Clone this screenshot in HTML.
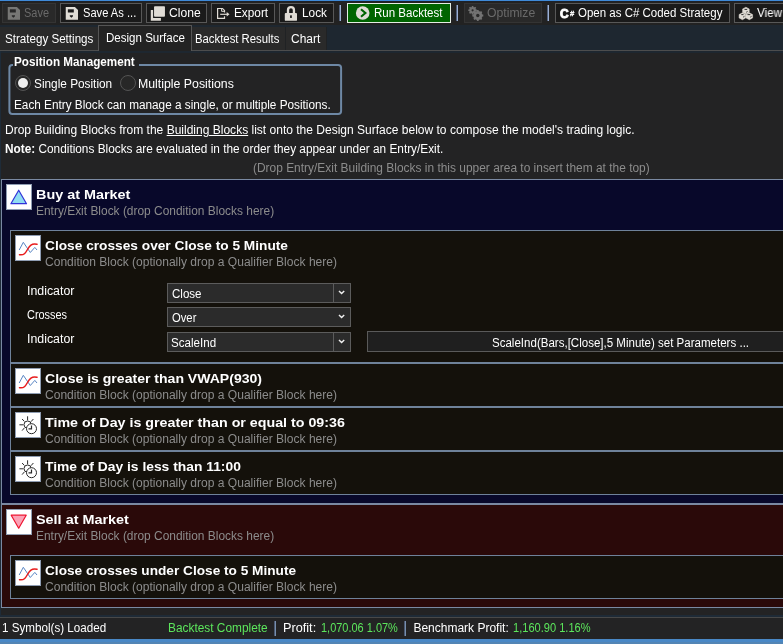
<!DOCTYPE html>
<html><head><meta charset="utf-8"><title>Strategy</title>
<style>
*{box-sizing:border-box;margin:0;padding:0}
html,body{width:783px;height:644px;overflow:hidden;background:#232324;font-family:"Liberation Sans","DejaVu Sans",sans-serif;font-size:12px;color:#fff}
body{position:relative}
#wrap{position:absolute;left:0;top:0;width:783px;height:644px;will-change:transform}
.abs{position:absolute}
.t{position:absolute;white-space:nowrap;line-height:16px;font-size:12px;transform-origin:0 50%}
.b{font-weight:bold}
.g{color:#8c8c8c}
.h{font-size:13.33px;font-weight:bold;line-height:18px}
#topline{left:0;top:0;width:783px;height:1px;background:#3f8ad8}
#topline2{left:0;top:1px;width:783px;height:1px;background:#1d2128}
#toolbar{left:0;top:2px;width:783px;height:23px;background:#222222}
.btn{position:absolute;top:3px;height:20px;background:#1a1a1a;border:1px solid #585858}
.btn.dis{background:#292929;border-color:#343434}
.btn.run{background:#006400;border-color:#e4ece4}
.sep{position:absolute;top:5px;width:2px;height:16px;background:linear-gradient(90deg,#55647f 50%,#9cb0d4 50%)}
#tabs{left:0;top:25px;width:783px;height:28px;background:#1e2730}
#tabline{left:0;top:50px;width:783px;height:1px;background:#4d4d4d}
.tab{position:absolute;top:27px;height:23px;background:#2a2a2a;border-right:1px solid #202224}
.tab.act{top:25px;height:26px;background:#232323;border:1px solid #555;border-bottom:none}

.radio{position:absolute;width:16px;height:16px;border-radius:50%;border:1px solid #545454;background:#272727}
.radio.on:after{content:"";position:absolute;left:2px;top:2px;width:10px;height:10px;border-radius:50%;background:#efefef}
#lstrip{left:0;top:51px;width:1px;height:565px;background:#1e2b38}
.entry{position:absolute;left:1px;width:790px;border:1px solid #7a89a2}
.buy{background:#08082a}
.sell{background:#2a0909}
.cond{position:absolute;left:10px;width:790px;background:#14110b;border:1px solid #6f829a}
.ico{position:absolute;width:26px;height:26px;background:#fff;border:1px solid #8f9db2}
.ico svg{display:block}
.combo{position:absolute;left:167px;width:184px;height:20px;background:#2b2b2b;border:1px solid #5c5c5c}
.combo .arr{position:absolute;right:0;top:0;width:17px;height:18px;border-left:1px solid #5c5c5c}
.combo.flat .arr{width:16px}
.combo.flat .arr{border-left:none}
#pbtn{left:367px;top:331px;width:520px;height:21px;background:#1f1f1f;border:1px solid #5a5a5a}
#sline1{left:0;top:615px;width:783px;height:2px;background:#1e2a36}
#sline2{left:0;top:617px;width:783px;height:1px;background:#484848}
#botline{left:0;top:639px;width:783px;height:5px;background:linear-gradient(#4988c6 60%,#5385b4 60%)}
.vsep{position:absolute;top:621px;width:2px;height:15px;background:linear-gradient(90deg,#4c5a72 50%,#768eae 50%)}
.grn{color:#5ce65c}
</style></head><body><div id="wrap">
<div id="topline" class="abs"></div><div id="topline2" class="abs"></div><div id="toolbar" class="abs"></div><div id="tabs" class="abs"></div><div id="tabline" class="abs"></div>
<div class="btn dis" style="left:2px;width:54px"></div>
<div class="btn " style="left:60px;width:82px"></div>
<div class="btn " style="left:146px;width:61px"></div>
<div class="btn " style="left:211px;width:64px"></div>
<div class="btn " style="left:279px;width:55px"></div>
<div class="btn run" style="left:347px;width:104px"></div>
<div class="btn dis" style="left:464px;width:78px"></div>
<div class="btn " style="left:555px;width:175px"></div>
<div class="btn " style="left:734px;width:60px"></div>
<svg class="abs" style="left:6px;top:5px" width="16" height="17" viewBox="6 5 16 17"><g transform="translate(-58 0)"><path d="M65.750 7H74.900L78 10.100V19.800H65.750z" fill="#777775"/><rect x="67.850" y="9.300" width="5.950" height="3.200" fill="#292929"/><path d="M69.800 15.200h3.200v1.100l-1.600 1.500l-1.600-1.500z" fill="#292929"/></g></svg>
<svg class="abs" style="left:64px;top:5px" width="16" height="17" viewBox="64 5 16 17"><g transform="translate(0 0)"><path d="M65.750 7H74.900L78 10.100V19.800H65.750z" fill="#e0dcd5"/><rect x="67.850" y="9.300" width="5.950" height="3.200" fill="#1a1a1a"/><path d="M69.800 15.200h3.200v1.100l-1.600 1.500l-1.600-1.500z" fill="#1a1a1a"/></g></svg>
<svg class="abs" style="left:149px;top:5px" width="18" height="17" viewBox="149 5 18 17"><path d="M150.800 10.100H153.100V17.900H160.900V20.800H150.800z" fill="#e0dcd5"/><rect x="154.050" y="6.200" width="10.900" height="10.550" rx="0.900" fill="#e0dcd5"/></svg>
<svg class="abs" style="left:215px;top:6px" width="17" height="15" viewBox="215 6 17 15"><path d="M224.500 12.500V10.400L222.500 8.500H217.600V18.300H224.500V16.200" fill="none" stroke="#e0dcd5" stroke-width="1.200"/><path d="M221.600 8.700V11.300H224.300" fill="none" stroke="#e0dcd5" stroke-width="1"/><path d="M220.200 14.300H227.500" stroke="#e0dcd5" stroke-width="1.150"/><path d="M226.700 12.100L229.500 14.300L226.700 16.500z" fill="#e0dcd5"/></svg>
<svg class="abs" style="left:283px;top:4px" width="16" height="18" viewBox="283 4 16 18"><rect x="284.800" y="13.100" width="12.200" height="7.700" rx="0.900" fill="#e0dcd5"/><path d="M288 13.600V10.100a2.970 2.970 0 0 1 5.940 0V13.600" fill="none" stroke="#e0dcd5" stroke-width="2.300"/><rect x="290.100" y="15.200" width="1.700" height="2.700" rx="0.500" fill="#1a1a1a"/></svg>
<svg class="abs" style="left:354px;top:4px" width="18" height="18" viewBox="354 4 18 18"><circle cx="362.700" cy="13" r="6.800" fill="#e0dcd5"/><path d="M361 9.300L365.400 13L361 16.700" fill="none" stroke="#006400" stroke-width="2.100"/></svg>
<svg class="abs" style="left:467px;top:5px" width="18" height="17" viewBox="467 5 18 17"><g transform="translate(467.200 6)"><g fill="#727272"><circle cx="5.400" cy="4.300" r="3.300"/><circle cx="10.600" cy="9.500" r="4.600"/><path d="M4.600 0h1.600v8.600h-1.600zM1.100 3.500h8.600v1.600h-8.600zM1.800 1.800l1.100-1.100l6.100 6.100l-1.100 1.100zM2.900 7.900l-1.100-1.100l6.100-6.100l1.100 1.100z"/><path d="M9.700 4h1.800v11h-1.800zM5.100 8.600h11v1.800h-11zM6.100 6.300l1.300-1.300l7.700 7.700l-1.300 1.300zM7.400 14l-1.300-1.300l7.700-7.700l1.300 1.300z"/></g><circle cx="5.400" cy="4.300" r="1.100" fill="#292929"/><circle cx="10.600" cy="9.500" r="1.700" fill="#292929"/></g></svg>
<svg class="abs" style="left:737px;top:5px" width="18" height="17" viewBox="737 5 18 17"><path d="M745.90 7.20L749.20 8.93L749.20 12.38L745.90 14.10L742.60 12.38L742.60 8.93zM742.40 12.80L745.70 14.53L745.70 17.98L742.40 19.70L739.10 17.98L739.10 14.53zM749.30 12.80L752.60 14.53L752.60 17.98L749.30 19.70L746.00 17.98L746.00 14.53z" fill="#e0dcd5" stroke="#e0dcd5" stroke-width="0.500" stroke-linejoin="round"/><path d="M744.500 9.400H747.200M746.300 12.200L747.500 11.500M741.300 14.600H743.500M743.200 17.100L744.400 16.400M747.500 14.600H750.300M750.300 17.100L751.500 16.400" fill="none" stroke="#1a1a1a" stroke-width="0.900"/></svg>
<div class="t b" id="csC" style="left:559.800px;top:6px;font-size:13px;line-height:16px;-webkit-text-stroke:0.900px #fff;transform:scaleX(0.92)">C</div>
<div class="t b" id="csH" style="left:569.600px;top:6px;font-size:7px;line-height:16px;-webkit-text-stroke:0.300px #fff;transform:scaleX(1.1)">#</div>
<div class="sep" style="left:339px"></div>
<div class="sep" style="left:456px"></div>
<div class="sep" style="left:547px"></div>
<div class="t " style="left:24.05px;top:5.00px;transform:scaleX(0.9136);color:#6a6a6a;">Save</div>
<div class="t " style="left:82.50px;top:5.00px;transform:scaleX(0.9278);">Save As ...</div>
<div class="t " style="left:169.14px;top:5.00px;transform:scaleX(1.0086);">Clone</div>
<div class="t " style="left:233.73px;top:5.00px;transform:scaleX(0.9831);">Export</div>
<div class="t " style="left:301.78px;top:5.00px;transform:scaleX(0.9855);">Lock</div>
<div class="t " style="left:373.97px;top:5.00px;transform:scaleX(0.9596);">Run Backtest</div>
<div class="t " style="left:487.23px;top:5.00px;transform:scaleX(1.0186);color:#6a6a6a;">Optimize</div>
<div class="t " style="left:578.25px;top:5.00px;transform:scaleX(0.9578);">Open as C# Coded Strategy</div>
<div class="t " style="left:757.17px;top:5.00px;transform:scaleX(0.9687);">View</div>
<div class="tab " style="left:0px;width:99px"></div>
<div class="tab act" style="left:98px;width:94px"></div>
<div class="tab " style="left:192px;width:94px"></div>
<div class="tab " style="left:286px;width:41px"></div>
<div class="t " style="left:5.14px;top:31.00px;transform:scaleX(0.9666);">Strategy Settings</div>
<div class="t " style="left:105.55px;top:30.00px;transform:scaleX(0.9620);">Design Surface</div>
<div class="t " style="left:195.16px;top:31.00px;transform:scaleX(0.9439);">Backtest Results</div>
<div class="t " style="left:291.13px;top:31.00px;transform:scaleX(0.9971);">Chart</div>
<svg class="abs" style="left:0;top:55px" width="350" height="65" viewBox="0 55 350 65"><rect x="9.400" y="64.900" width="331.700" height="49.100" rx="3" fill="none" stroke="#6e88a5" stroke-width="2"/></svg>
<div class="abs" style="left:12.500px;top:63px;width:126.500px;height:4px;background:#232324"></div>
<div class="t b" style="left:13.80px;top:54.00px;transform:scaleX(0.9730);">Position Management</div>
<div class="radio on" style="left:15px;top:75px"></div>
<div class="radio" style="left:120px;top:75px"></div>
<div class="t " style="left:33.76px;top:76.00px;transform:scaleX(0.9846);">Single Position</div>
<div class="t " style="left:138.20px;top:76.00px;transform:scaleX(1.0259);">Multiple Positions</div>
<div class="t " style="left:14.11px;top:97.00px;transform:scaleX(0.9810);">Each Entry Block can manage a single, or multiple Positions.</div>
<div class="t " style="left:4.75px;top:122.00px;transform:scaleX(1.0015);">Drop Building Blocks from the <u>Building Blocks</u> list onto the Design Surface below to compose the model's trading logic.</div>
<div class="t " style="left:4.93px;top:141.00px;transform:scaleX(0.9851);"><b>Note:</b> Conditions Blocks are evaluated in the order they appear under an Entry/Exit.</div>
<div class="t g" style="left:253.32px;top:160.00px;transform:scaleX(0.9946);">(Drop Entry/Exit Building Blocks in this upper area to insert them at the top)</div>
<div id="lstrip" class="abs"></div>
<div class="entry buy" style="top:179px;height:325px"></div>
<div class="entry sell" style="top:504px;height:104px"></div>
<div class="ico" style="left:6px;top:184px"><svg width="24" height="24" viewBox="1 1 24 24"><path d="M12.700 6.200L20.500 19.700H4.900z" fill="#8fdcf2" stroke="#3232d8" stroke-width="1.200" stroke-linejoin="round"/></svg></div>
<div class="ico" style="left:6px;top:509px"><svg width="24" height="24" viewBox="1 1 24 24"><path d="M12.700 19.200L20.200 6.200H5.200z" fill="#fba2b6" stroke="#ee1430" stroke-width="1.200" stroke-linejoin="round"/></svg></div>
<div class="t h" style="left:36.02px;top:186.00px;transform:scaleX(1.0800);">Buy at Market</div>
<div class="t g" style="left:36.13px;top:203.00px;transform:scaleX(0.9946);">Entry/Exit Block (drop Condition Blocks here)</div>
<div class="t h" style="left:36.08px;top:511.00px;transform:scaleX(1.0809);">Sell at Market</div>
<div class="t g" style="left:35.68px;top:528.00px;transform:scaleX(0.9946);">Entry/Exit Block (drop Condition Blocks here)</div>
<div class="cond" style="top:230px;height:133px"></div>
<div class="ico" style="left:15px;top:235px"><svg width="24" height="24" viewBox="1 1 24 24"><path d="M4.200 15L8.300 7.300L15.300 17.500L19.800 12.400L22 15" fill="none" stroke="#5a86c4" stroke-width="1" stroke-linejoin="round"/><path d="M4.500 19.700C9 20.500 10.500 18 12.500 14.500S16.500 8 22 9.300" fill="none" stroke="#e81c1c" stroke-width="1.500" stroke-linecap="round"/></svg></div>
<div class="t h" style="left:45.08px;top:237.00px;transform:scaleX(1.0283);">Close crosses over Close to 5 Minute</div>
<div class="t g" style="left:45.27px;top:254.00px;transform:scaleX(1.0041);">Condition Block (optionally drop a Qualifier Block here)</div>
<div class="cond" style="top:363px;height:44px"></div>
<div class="ico" style="left:15px;top:368px"><svg width="24" height="24" viewBox="1 1 24 24"><path d="M4.200 15L8.300 7.300L15.300 17.500L19.800 12.400L22 15" fill="none" stroke="#5a86c4" stroke-width="1" stroke-linejoin="round"/><path d="M4.500 19.700C9 20.500 10.500 18 12.500 14.500S16.500 8 22 9.300" fill="none" stroke="#e81c1c" stroke-width="1.500" stroke-linecap="round"/></svg></div>
<div class="t h" style="left:44.99px;top:370.00px;transform:scaleX(1.0540);">Close is greater than VWAP(930)</div>
<div class="t g" style="left:45.27px;top:387.00px;transform:scaleX(1.0041);">Condition Block (optionally drop a Qualifier Block here)</div>
<div class="cond" style="top:407px;height:44px"></div>
<div class="ico" style="left:15px;top:412px"><svg width="24" height="24" viewBox="1 1 24 24"><g fill="none" stroke="#2a2a2a" stroke-width="1"><circle cx="12.600" cy="12.600" r="3.600"/><path d="M12.600 4.300v4M4.400 12.800h4M7.100 7l2.200 2.400M18.400 7l-2.400 2.700M7.100 18.600l2.300-2.700"/></g><circle cx="16.500" cy="16.700" r="5" fill="#fff" stroke="#2a2a2a" stroke-width="1"/><path d="M16.500 13.600v3.200h-3" fill="none" stroke="#2a2a2a" stroke-width="1.200"/></svg></div>
<div class="t h" style="left:45.24px;top:414.00px;transform:scaleX(1.0692);">Time of Day is greater than or equal to 09:36</div>
<div class="t g" style="left:45.27px;top:431.00px;transform:scaleX(1.0041);">Condition Block (optionally drop a Qualifier Block here)</div>
<div class="cond" style="top:451px;height:44px"></div>
<div class="ico" style="left:15px;top:456px"><svg width="24" height="24" viewBox="1 1 24 24"><g fill="none" stroke="#2a2a2a" stroke-width="1"><circle cx="12.600" cy="12.600" r="3.600"/><path d="M12.600 4.300v4M4.400 12.800h4M7.100 7l2.200 2.400M18.400 7l-2.400 2.700M7.100 18.600l2.300-2.700"/></g><circle cx="16.500" cy="16.700" r="5" fill="#fff" stroke="#2a2a2a" stroke-width="1"/><path d="M16.500 13.600v3.200h-3" fill="none" stroke="#2a2a2a" stroke-width="1.200"/></svg></div>
<div class="t h" style="left:45.24px;top:458.00px;transform:scaleX(1.0380);">Time of Day is less than 11:00</div>
<div class="t g" style="left:45.27px;top:475.00px;transform:scaleX(1.0041);">Condition Block (optionally drop a Qualifier Block here)</div>
<div class="cond" style="top:555px;height:44px"></div>
<div class="ico" style="left:15px;top:560px"><svg width="24" height="24" viewBox="1 1 24 24"><path d="M4.200 15L8.300 7.300L15.300 17.500L19.800 12.400L22 15" fill="none" stroke="#5a86c4" stroke-width="1" stroke-linejoin="round"/><path d="M4.500 19.700C9 20.500 10.500 18 12.500 14.500S16.500 8 22 9.300" fill="none" stroke="#e81c1c" stroke-width="1.500" stroke-linecap="round"/></svg></div>
<div class="t h" style="left:45.11px;top:562.00px;transform:scaleX(1.0240);">Close crosses under Close to 5 Minute</div>
<div class="t g" style="left:45.27px;top:579.00px;transform:scaleX(1.0041);">Condition Block (optionally drop a Qualifier Block here)</div>
<div class="t " style="left:26.88px;top:283.00px;transform:scaleX(1.0300);">Indicator</div>
<div class="combo " style="top:283px"><div class="arr"><svg width="16" height="18" viewBox="0 0 16 18" style="display:block"><path d="M5 6.900l2.600 2.700l2.600-2.700" fill="none" stroke="#f0f0f0" stroke-width="1.400"/></svg></div></div>
<div class="t " style="left:171.96px;top:286.00px;transform:scaleX(0.9630);">Close</div>
<div class="t " style="left:27.43px;top:307.00px;transform:scaleX(0.9103);">Crosses</div>
<div class="combo flat" style="top:307px"><div class="arr"><svg width="16" height="18" viewBox="0 0 16 18" style="display:block"><path d="M5 6.900l2.600 2.700l2.600-2.700" fill="none" stroke="#f0f0f0" stroke-width="1.400"/></svg></div></div>
<div class="t " style="left:171.92px;top:310.00px;transform:scaleX(0.9373);">Over</div>
<div class="t " style="left:26.88px;top:331.00px;transform:scaleX(1.0300);">Indicator</div>
<div class="combo " style="top:332px"><div class="arr"><svg width="16" height="18" viewBox="0 0 16 18" style="display:block"><path d="M5 6.900l2.600 2.700l2.600-2.700" fill="none" stroke="#f0f0f0" stroke-width="1.400"/></svg></div></div>
<div class="t " style="left:171.30px;top:335.00px;transform:scaleX(0.9652);">ScaleInd</div>
<div id="pbtn" class="abs"></div>
<div class="t " style="left:492.24px;top:335.00px;transform:scaleX(0.9611);">ScaleInd(Bars,[Close],5 Minute) set Parameters ...</div>
<div id="sline1" class="abs"></div><div id="sline2" class="abs"></div><div id="botline" class="abs"></div>
<div class="t " style="left:2.31px;top:620.00px;transform:scaleX(0.9696);">1 Symbol(s) Loaded</div>
<div class="t grn" style="left:168.09px;top:620.00px;transform:scaleX(0.9895);">Backtest Complete</div>
<div class="vsep" style="left:274px"></div>
<div class="t " style="left:283.41px;top:620.00px;transform:scaleX(1.0582);">Profit:</div>
<div class="t grn" style="left:320.82px;top:620.00px;transform:scaleX(0.9143);">1,070.06 1.07%</div>
<div class="vsep" style="left:404px"></div>
<div class="t " style="left:413.38px;top:620.00px;transform:scaleX(1.0000);">Benchmark Profit:</div>
<div class="t grn" style="left:513.14px;top:620.00px;transform:scaleX(0.9230);">1,160.90 1.16%</div>
</div></body></html>
